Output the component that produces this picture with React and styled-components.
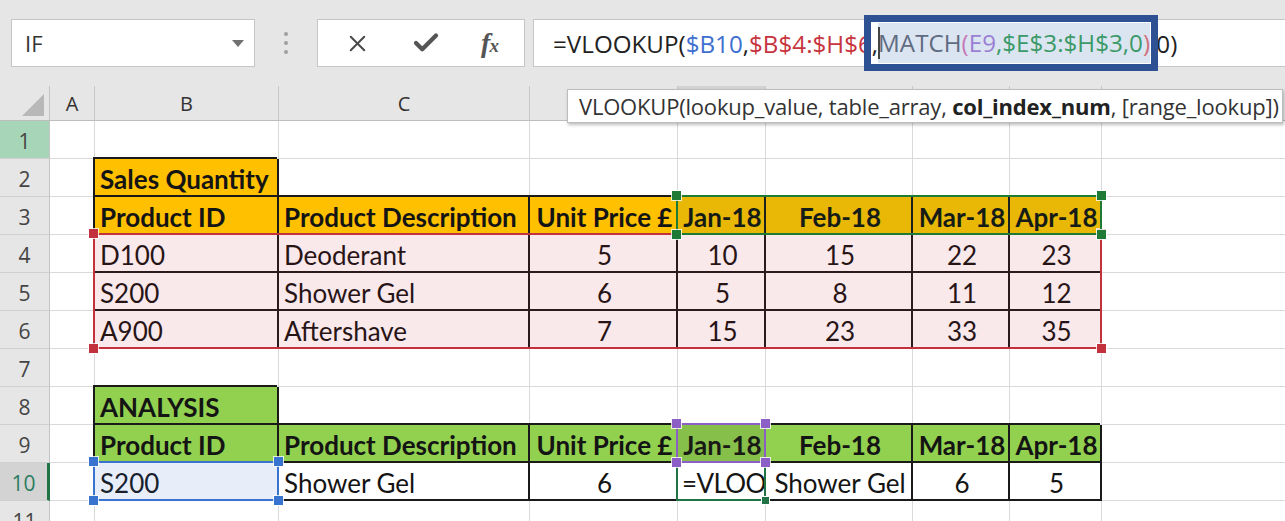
import React from "react";
import styled, { createGlobalStyle } from "styled-components";
import { X, Check } from "lucide-react";

const GlobalStyle = createGlobalStyle`
  html, body { margin: 0; padding: 0; background: #fff; }
  body {
    width: 1285px;
    height: 521px;
    overflow: hidden;
    font-family: "Open Sans", "Liberation Sans", sans-serif;
  }
`;

const COLS = [50, 45, 184, 251, 148, 88, 147, 97, 92, 300];
// D..I headers sit under the function tooltip, so only A..C show a letter
const LETTERS = ["A", "B", "C", "", "", "", "", "", ""];

const ORANGE = "#ffc000";
const GREEN = "#92d050";

// sheet content: row -> list of cells (col index is the grid column, B = 3)
const head = (bg) => [
  [3, "Product ID"],
  [4, "Product Description"],
  [5, "Unit Price £", "center"],
  [6, "Jan-18", "center"],
  [7, "Feb-18", "center"],
  [8, "Mar-18", "center"],
  [9, "Apr-18", "center"],
].map((c) => ({ c: c[0], text: c[1], align: c[2], bold: true, bg }));

const data = (vals) =>
  vals.map((v, i) => ({ c: i + 3, text: v, align: i < 2 ? "left" : "center" }));

const SHEET = {
  2: [{ c: 3, text: "Sales Quantity", bold: true, bg: ORANGE }],
  3: head(ORANGE),
  4: data(["D100", "Deoderant", "5", "10", "15", "22", "23"]),
  5: data(["S200", "Shower Gel", "6", "5", "8", "11", "12"]),
  6: data(["A900", "Aftershave", "7", "15", "23", "33", "35"]),
  8: [{ c: 3, text: "ANALYSIS", bold: true, bg: GREEN }],
  9: head(GREEN),
  // E10 is being edited, only the start of the formula shows in the cell
  10: data(["S200", "Shower Gel", "6", "=VLOO", "Shower Gel", "6", "5"]).map((c) =>
    c.c === 6 ? { ...c, align: "left", tight: true } : c
  ),
};

const RANGES = [
  { key: "red", r: "5 / 8", c: "3 / 10", color: "#c3313c", fill: "rgba(205, 40, 60, 0.1)" },
  { key: "green", r: "4 / 5", c: "6 / 10", color: "#1f7a35", fill: "rgba(40, 110, 60, 0.1)" },
  { key: "blue", r: "11 / 12", c: "3 / 4", color: "#3873d0", fill: "rgba(58, 118, 210, 0.12)" },
  { key: "purple", r: "10 / 11", c: "6 / 7", color: "#8b5fc6", fill: "rgba(60, 70, 40, 0.12)" },
];

const Page = styled.div`
  position: relative;
  width: 1285px;
  height: 521px;
  overflow: hidden;
`;

const TopBar = styled.div`
  height: 86px;
  background: #e6e6e6;
  display: flex;
  align-items: center;
  padding-left: 11px;
  box-sizing: border-box;
`;

const NameBox = styled.div`
  width: 244px;
  height: 48px;
  box-sizing: border-box;
  background: #fff;
  border: 1px solid #c6c6c6;
  display: flex;
  align-items: center;
  justify-content: space-between;
  padding: 0 10px 0 13px;
  font-size: 22px;
  color: #333;
`;

const DropArrow = styled.span`
  width: 0;
  height: 0;
  border-left: 6px solid transparent;
  border-right: 6px solid transparent;
  border-top: 7px solid #707070;
`;

const Dots = styled.div`
  width: 62px;
  display: flex;
  flex-direction: column;
  align-items: center;
  gap: 5px;
`;

const Dot = styled.span`
  width: 4px;
  height: 4px;
  border-radius: 50%;
  background: #a0a0a0;
`;

const ButtonsBox = styled.div`
  width: 208px;
  height: 48px;
  box-sizing: border-box;
  background: #fff;
  border: 1px solid #c6c6c6;
  display: flex;
  align-items: center;
  justify-content: space-around;
  padding: 0 6px;
  color: #555;
`;

const Fx = styled.span`
  font-family: "Liberation Serif", serif;
  font-style: italic;
  font-weight: 700;
  font-size: 28px;
  color: #555;
  letter-spacing: -1px;
  sub {
    font-size: 19px;
    vertical-align: 0;
  }
`;

const FormulaBox = styled.div`
  flex: 1;
  margin-left: 8px;
  height: 48px;
  box-sizing: border-box;
  background: #fff;
  border: 1px solid #c6c6c6;
  border-right: none;
  display: flex;
  align-items: center;
  padding-left: 19px;
  font-size: 24.2px;
  color: #222;
  white-space: nowrap;
`;

const Ref = styled.span`
  color: ${(p) => p.$color};
`;

const Selected = styled.span`
  position: relative;
  display: inline-block;
  line-height: 40px;
  background: #dbe5f1;
  color: #5f6b80;
  &::before {
    content: "";
    position: absolute;
    left: 0;
    top: 4px;
    bottom: 4px;
    width: 2px;
    background: #444;
  }
  &::after {
    content: "";
    position: absolute;
    left: -14px;
    right: -8px;
    top: -8px;
    bottom: -8px;
    border: 7px solid #2d5192;
  }
`;

const Sheet = styled.div`
  display: grid;
  grid-template-columns: ${COLS.map((w) => w + "px").join(" ")};
  grid-template-rows: 35px repeat(11, 38px);
`;

const Corner = styled.div`
  grid-row: 1;
  grid-column: 1;
  position: relative;
  background: #e6e6e6;
  border-right: 1px solid #c4c4c4;
  border-bottom: 1px solid #bdbdbd;
  &::after {
    content: "";
    position: absolute;
    right: 5px;
    bottom: 4px;
    width: 22px;
    height: 22px;
    background: #b8b8b8;
    clip-path: polygon(100% 0, 100% 100%, 0 100%);
  }
`;

const ColHead = styled.div`
  grid-row: 1;
  grid-column: ${(p) => p.$c};
  background: ${(p) => (p.$active ? "#d3d3d3" : "#e6e6e6")};
  border-right: 1px solid #c8c8c8;
  border-bottom: 1px solid #bdbdbd;
  display: flex;
  align-items: center;
  justify-content: center;
  font-size: 20px;
  color: #333;
`;

const RowHead = styled.div`
  grid-row: ${(p) => p.$r};
  grid-column: 1;
  background: ${(p) => (p.$state === "mark" ? "#a6d6b7" : p.$state === "active" ? "#d3d3d3" : "#e6e6e6")};
  border-right: ${(p) => (p.$state === "active" ? "3px solid #217346" : "1px solid #c4c4c4")};
  border-bottom: 1px solid #d0d0d0;
  display: flex;
  align-items: center;
  justify-content: center;
  font-size: 21px;
  padding-top: 2px;
  color: ${(p) => (p.$state === "active" ? "#2a7d62" : "#444")};
`;

const Cell = styled.div`
  grid-row: ${(p) => p.$r};
  grid-column: ${(p) => p.$c};
  min-width: 0;
  box-sizing: border-box;
  background: ${(p) => p.$bg || "#fff"};
  border-right: ${(p) => (p.$box ? "2px solid #1a1a1a" : "1px solid #d9d9d9")};
  border-bottom: ${(p) => (p.$box ? "2px solid #1a1a1a" : "1px solid #d9d9d9")};
  box-shadow: ${(p) => (p.$box ? "-2px -2px 0 0 #1a1a1a" : "none")};
  display: flex;
  align-items: center;
  justify-content: ${(p) => (p.$align === "center" ? "center" : "flex-start")};
  padding: 3px 2px 0 ${(p) => (p.$tight ? "4px" : "5px")};
  overflow: hidden;
  white-space: nowrap;
  font-family: Lato, "Liberation Sans", sans-serif;
  font-size: 26px;
  letter-spacing: ${(p) => (p.$tight ? "-0.6px" : "normal")};
  font-weight: ${(p) => (p.$bold ? 700 : 400)};
  color: #141414;
`;

const Range = styled.div`
  grid-row: ${(p) => p.$r};
  grid-column: ${(p) => p.$c};
  position: relative;
  margin: -2px 0 0 -2px;
  border: 2px solid ${(p) => p.$color};
  background: ${(p) => p.$fill || "transparent"};
  pointer-events: none;
`;

const Handle = styled.span`
  position: absolute;
  width: 9px;
  height: 9px;
  background: ${(p) => p.$color};
  box-shadow: 0 0 0 1px rgba(255, 255, 255, 0.8);
  ${(p) => (p.$v === "t" ? "top: -6px;" : "bottom: -6px;")}
  ${(p) => (p.$h === "l" ? "left: -6px;" : "right: -6px;")}
`;

const FillHandle = styled.span`
  position: absolute;
  right: -5px;
  bottom: -5px;
  width: 7px;
  height: 7px;
  background: #217346;
  box-shadow: 0 0 0 1px #fff;
`;

const Tooltip = styled.div`
  position: absolute;
  left: 567px;
  top: 89px;
  width: 716px;
  height: 34px;
  box-sizing: border-box;
  padding: 0 6px 0 11px;
  display: flex;
  align-items: center;
  background: #fff;
  border: 1px solid #bdbdbd;
  box-shadow: 1px 2px 3px rgba(0, 0, 0, 0.25);
  font-size: 22px;
  letter-spacing: -0.2px;
  color: #333;
  white-space: nowrap;
  overflow: hidden;
  b {
    font-weight: 700;
    color: #222;
  }
`;

const Formula = () => (
  <FormulaBox>
    =VLOOKUP(
    <Ref $color="#3d6fd1">$B10</Ref>,<Ref $color="#c7343d">$B$4:$H$6</Ref>,
    <Selected>
      MATCH<Ref $color="#c77bb8">(</Ref>
      <Ref $color="#9a7fd4">E9</Ref>
      <Ref $color="#3b9a68">,$E$3:$H$3,0</Ref>
      <Ref $color="#d0707a">)</Ref>
    </Selected>
    ,0)
  </FormulaBox>
);

const rowState = (r) => (r === 1 ? "mark" : r === 10 ? "active" : "");

const App = () => {
  const rows = [1, 2, 3, 4, 5, 6, 7, 8, 9, 10, 11];

  return (
    <Page>
      <GlobalStyle />
      <TopBar>
        <NameBox>
          IF
          <DropArrow />
        </NameBox>
        <Dots>
          <Dot />
          <Dot />
          <Dot />
        </Dots>
        <ButtonsBox>
          <X size={27} strokeWidth={1.8} color="#4a4a4a" />
          <Check size={30} strokeWidth={3.4} color="#555" />
          <Fx>
            f<sub>x</sub>
          </Fx>
        </ButtonsBox>
        <Formula />
      </TopBar>

      <Sheet>
        <Corner />
        {LETTERS.map((l, i) => (
          <ColHead key={i} $c={i + 2} $active={i === 4}>
            {l}
          </ColHead>
        ))}

        {rows.map((r) => (
          <React.Fragment key={r}>
            <RowHead $r={r + 1} $state={rowState(r)}>
              {r}
            </RowHead>
            {COLS.slice(1).map((_, i) => {
              const c = i + 2;
              const cell = (SHEET[r] || []).find((x) => x.c === c);
              return (
                <Cell
                  key={c}
                  $r={r + 1}
                  $c={c}
                  $box={!!cell}
                  $bg={cell && cell.bg}
                  $bold={cell && cell.bold}
                  $align={cell && cell.align}
                  $tight={cell && cell.tight}
                >
                  {cell ? cell.text : null}
                </Cell>
              );
            })}
          </React.Fragment>
        ))}

        {RANGES.slice(0, 2).map((g) => (
          <Range key={g.key} $r={g.r} $c={g.c} $color={g.color} $fill={g.fill}>
            <Handle $color={g.color} $v="t" $h="l" />
            <Handle $color={g.color} $v="t" $h="r" />
            <Handle $color={g.color} $v="b" $h="l" />
            <Handle $color={g.color} $v="b" $h="r" />
          </Range>
        ))}

        <Range $r="11 / 12" $c="6 / 7" $color="#217346">
          <FillHandle />
        </Range>

        {RANGES.slice(2).map((g) => (
          <Range key={g.key} $r={g.r} $c={g.c} $color={g.color} $fill={g.fill}>
            <Handle $color={g.color} $v="t" $h="l" />
            <Handle $color={g.color} $v="t" $h="r" />
            <Handle $color={g.color} $v="b" $h="l" />
            <Handle $color={g.color} $v="b" $h="r" />
          </Range>
        ))}
      </Sheet>

      <Tooltip>
        VLOOKUP(lookup_value, table_array,&nbsp;<b>col_index_num</b>, [range_lookup])
      </Tooltip>
    </Page>
  );
};

export default App;
